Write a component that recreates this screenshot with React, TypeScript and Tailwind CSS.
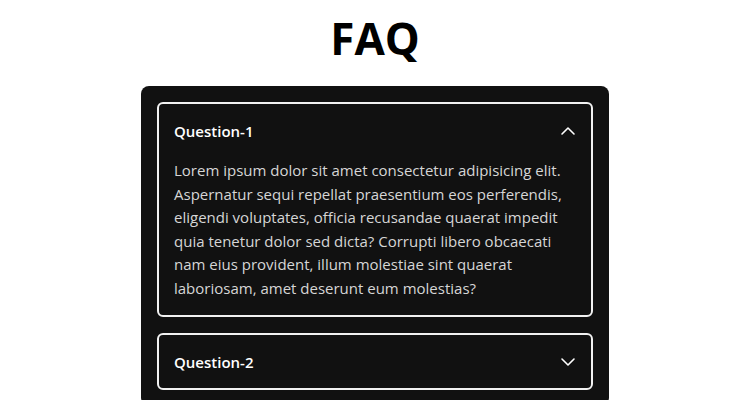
import React, { useState } from "react";

const items = [
  {
    q: "Question-1",
    a: "Lorem ipsum dolor sit amet consectetur adipisicing elit. Aspernatur sequi repellat praesentium eos perferendis, eligendi voluptates, officia recusandae quaerat impedit quia tenetur dolor sed dicta? Corrupti libero obcaecati nam eius provident, illum molestiae sint quaerat laboriosam, amet deserunt eum molestias?",
  },
  {
    q: "Question-2",
    a: "Lorem ipsum dolor sit amet consectetur adipisicing elit.",
  },
];

function Chevron({ up }: { up: boolean }) {
  return (
    <svg width="16" height="16" viewBox="0 0 16 16" fill="none" stroke="currentColor" strokeWidth="1.6" strokeLinecap="round" strokeLinejoin="round">
      {up ? <path d="M2 11 L8 5 L14 11" /> : <path d="M2 5 L8 11 L14 5" />}
    </svg>
  );
}

export default function App() {
  const [open, setOpen] = useState<number>(0);
  return (
    <div className="min-h-screen bg-white flex flex-col items-center" style={{ fontFamily: '"Open Sans", "Noto Sans", sans-serif' }}>
      <h1 className="text-[44px] font-bold text-black leading-none mt-[16px] mb-[26px]">FAQ</h1>
      <div className="w-[468px] bg-[#111111] rounded-lg p-4 flex flex-col gap-4">
        {items.map((it, i) => (
          <div key={i} className="border-2 border-[#f2f2f2] rounded-md">
            <button
              className="w-full flex items-center justify-between px-[15px] pt-[1px] h-[53px] text-white text-[15px] font-semibold"
              onClick={() => setOpen(open === i ? -1 : i)}
            >
              <span>{it.q}</span>
              <Chevron up={open === i} />
            </button>
            {open === i && (
              <p className="px-[15px] pt-[2px] pb-[15px] text-[15px] leading-[23.5px] text-[#d6d6d6]">{it.a}</p>
            )}
          </div>
        ))}
      </div>
    </div>
  );
}
